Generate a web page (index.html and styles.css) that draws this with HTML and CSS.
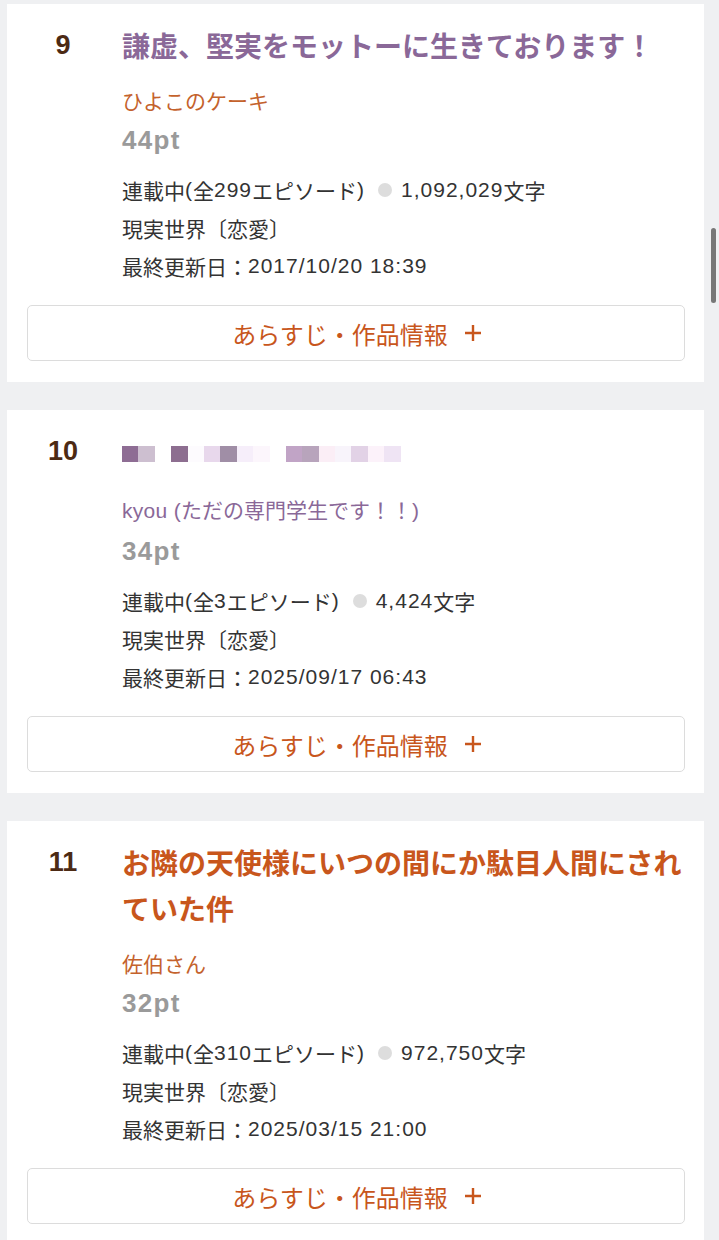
FILE: index.html
```html
<!DOCTYPE html>
<html lang="ja">
<head>
<meta charset="utf-8">
<title>ランキング</title>
<link rel="stylesheet" href="styles.css">
</head>
<body>
<main class="list">
  <article class="card">
    <div class="head">
      <span class="rank">9</span>
      <h2 class="title visited">謙虚、堅実をモットーに生きております！</h2>
    </div>
    <div class="body">
      <p class="author">ひよこのケーキ</p>
      <p class="pt">44pt</p>
      <ul class="info">
        <li>連載中<span class="lat">(</span>全<span class="lat">299</span>エピソード<span class="lat">)</span><span class="dot"></span><span class="lat">1,092,029</span>文字</li>
        <li>現実世界〔恋愛〕</li>
        <li>最終更新日：<span class="lat">2017/10/20 18:39</span></li>
      </ul>
    </div>
    <button class="more">あらすじ・作品情報<svg class="plus" viewBox="0 0 18 18" width="18" height="18"><path d="M9 1V17M1 9H17" stroke="currentColor" stroke-width="2.4" fill="none"/></svg></button>
  </article>

  <article class="card">
    <div class="head">
      <span class="rank">10</span>
      <div class="title mosaic" aria-label="（タイトル非表示）">
        <span style="background:#8e6d94"></span><span style="background:#cdbfd0"></span><span style="background:#ffffff"></span><span style="background:#8d6e90"></span><span style="background:#fdfbfe"></span><span style="background:#e8d8ec"></span><span style="background:#a08ea6"></span><span style="background:#f6eefa"></span><span style="background:#fcf6fc"></span><span style="background:#ffffff"></span><span style="background:#c1a4c6"></span><span style="background:#b8a4bc"></span><span style="background:#fbeef6"></span><span style="background:#f8f4fb"></span><span style="background:#e2d2e6"></span><span style="background:#fcf2fa"></span><span style="background:#efe4f4"></span>
      </div>
    </div>
    <div class="body">
      <p class="author visited"><span class="lat">kyou (</span>ただの専門学生です！！<span class="lat">)</span></p>
      <p class="pt">34pt</p>
      <ul class="info">
        <li>連載中<span class="lat">(</span>全<span class="lat">3</span>エピソード<span class="lat">)</span><span class="dot"></span><span class="lat">4,424</span>文字</li>
        <li>現実世界〔恋愛〕</li>
        <li>最終更新日：<span class="lat">2025/09/17 06:43</span></li>
      </ul>
    </div>
    <button class="more">あらすじ・作品情報<svg class="plus" viewBox="0 0 18 18" width="18" height="18"><path d="M9 1V17M1 9H17" stroke="currentColor" stroke-width="2.4" fill="none"/></svg></button>
  </article>

  <article class="card">
    <div class="head">
      <span class="rank">11</span>
      <h2 class="title">お隣の天使様にいつの間にか駄目人間にされていた件</h2>
    </div>
    <div class="body">
      <p class="author">佐伯さん</p>
      <p class="pt">32pt</p>
      <ul class="info">
        <li>連載中<span class="lat">(</span>全<span class="lat">310</span>エピソード<span class="lat">)</span><span class="dot"></span><span class="lat">972,750</span>文字</li>
        <li>現実世界〔恋愛〕</li>
        <li>最終更新日：<span class="lat">2025/03/15 21:00</span></li>
      </ul>
    </div>
    <button class="more">あらすじ・作品情報<svg class="plus" viewBox="0 0 18 18" width="18" height="18"><path d="M9 1V17M1 9H17" stroke="currentColor" stroke-width="2.4" fill="none"/></svg></button>
  </article>
</main>
<div class="scroll-thumb"></div>
</body>
</html>
```

FILE: styles.css
```css
html, body {
  margin: 0;
  padding: 0;
}
body {
  background: #eff0f2;
  font-family: "Noto Sans CJK JP", "Noto Sans", sans-serif;
  color: #333333;
  padding: 4px 15px 0 7px;
  overflow: hidden;
}
.list {
  display: flex;
  flex-direction: column;
  gap: 28px;
}
.card {
  background: #ffffff;
  padding: 18px 19px 21px 20px;
  display: flex;
  flex-direction: column;
}
.head {
  display: flex;
  align-items: flex-start;
  gap: 23px;
}
.rank {
  flex: 0 0 72px;
  text-align: center;
  font-family: "Liberation Sans", "Noto Sans", sans-serif;
  font-weight: 700;
  font-size: 27px;
  line-height: 46px;
  color: #4c2a14;
}
.title {
  margin: 0;
  font-size: 28px;
  line-height: 46px;
  font-weight: 700;
  color: #c8561c;
}
.title.visited {
  color: #8a6898;
}
.mosaic {
  display: flex;
  height: 49px;
  padding-top: 18px;
  box-sizing: border-box;
  align-items: flex-start;
}
.mosaic span {
  width: 16.4px;
  height: 16px;
  flex: 0 0 16.4px;
}
.body {
  margin-left: 95px;
}
.lat {
  font-family: "Liberation Sans", "Noto Sans", sans-serif;
  letter-spacing: 1px;
}
.author {
  margin: 12px 0 0;
  font-size: 21px;
  line-height: 40px;
  color: #c4622c;
}
.author .lat {
  letter-spacing: 0.3px;
}
.author.visited {
  color: #8a6898;
}
.pt {
  margin: 0;
  font-family: "Liberation Sans", "Noto Sans", sans-serif;
  font-size: 26px;
  line-height: 40px;
  font-weight: 700;
  letter-spacing: 1.3px;
  color: #9a9a9a;
}
.info {
  list-style: none;
  margin: 11px 0 0;
  padding: 0;
  font-size: 21px;
  line-height: 38px;
  color: #333333;
}
.info li {
  display: flex;
  align-items: center;
  white-space: pre;
}
.dot {
  width: 14px;
  height: 14px;
  border-radius: 50%;
  background: #dddddd;
  margin: 0 9px 0 13px;
}
.more {
  margin-top: 20px;
  height: 56px;
  width: 100%;
  background: #ffffff;
  border: 1px solid #dcdcdc;
  border-radius: 5px;
  font-family: "Noto Sans CJK JP", "Noto Sans", sans-serif;
  font-size: 24px;
  color: #c8561c;
  display: flex;
  align-items: center;
  justify-content: center;
  gap: 16px;
  padding: 0 0 0 2px;
}
.plus {
  display: block;
}
.scroll-thumb {
  position: fixed;
  right: 3px;
  top: 228px;
  width: 5px;
  height: 75px;
  border-radius: 3px;
  background: #777777;
}
```
